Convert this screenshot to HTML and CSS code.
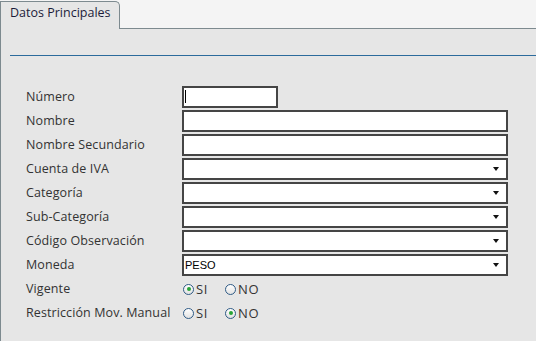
FILE: index.html
```html
<!DOCTYPE html>
<html lang="es">
<head>
    <meta charset="UTF-8">
    <title>Datos Principales</title>
    <link rel="stylesheet" href="styles.css">
</head>
<body>
    <div class="tabs">
        <div class="tab">Datos Principales</div>
        <div class="tab-fill"></div>
    </div>
    <div class="panel">
        <div class="rule"></div>
        <form class="form">
            <label for="numero">Número</label>
            <div class="field small">
                <input type="text" id="numero">
                <span class="caret"></span>
            </div>

            <label for="nombre">Nombre</label>
            <input type="text" id="nombre">

            <label for="nombre2">Nombre Secundario</label>
            <input type="text" id="nombre2">

            <label for="iva">Cuenta de IVA</label>
            <div class="select-wrap"><select id="iva"><option></option></select></div>

            <label for="categoria">Categoría</label>
            <div class="select-wrap"><select id="categoria"><option></option></select></div>

            <label for="subcat">Sub-Categoría</label>
            <div class="select-wrap"><select id="subcat"><option></option></select></div>

            <label for="obs">Código Observación</label>
            <div class="select-wrap"><select id="obs"><option></option></select></div>

            <label for="moneda">Moneda</label>
            <div class="select-wrap"><select id="moneda"><option>PESO</option></select></div>

            <label>Vigente</label>
            <div class="radios">
                <label class="radio"><input type="radio" name="vigente" checked>SI</label>
                <label class="radio"><input type="radio" name="vigente">NO</label>
            </div>

            <label>Restricción Mov. Manual</label>
            <div class="radios">
                <label class="radio"><input type="radio" name="restriccion">SI</label>
                <label class="radio"><input type="radio" name="restriccion" checked>NO</label>
            </div>
        </form>
    </div>
</body>
</html>
```

FILE: styles.css
```css
html, body {
    height: 100%;
}
body {
    margin: 0;
    font-family: "Open Sans", Arial, sans-serif;
    font-size: 12.5px;
    letter-spacing: 0.1px;
    color: #333;
    background-color: #e6e6e6;
    display: flex;
    flex-direction: column;
}
.tabs {
    display: flex;
    align-items: flex-end;
    background-color: #f4f4f4;
    height: 29px;
}
.tab {
    box-sizing: border-box;
    width: 120px;
    height: 28px;
    padding: 2px 0 0 9px;
    background-color: #e6e6e6;
    border: 1px solid #7d8a8f;
    border-bottom: none;
    border-radius: 0 5px 0 0;
    color: #1c1c3a;
    font-size: 12.5px;
    letter-spacing: 0;
}
.tab-fill {
    flex: 1;
    border-bottom: 1px solid #7d8a8f;
}
.panel {
    flex: 1;
    border-left: 1px solid #7d8a8f;
    padding: 26px 0 0 0;
}
.rule {
    margin-left: 9px;
    border-top: 1px solid #2c6b9c;
}
.form {
    display: grid;
    grid-template-columns: 156px 326px;
    grid-auto-rows: 22px;
    row-gap: 2px;
    align-items: center;
    padding: 30px 0 0 25px;
}
.form > label {
    line-height: 22px;
}
input[type="text"], select {
    box-sizing: border-box;
    width: 100%;
    height: 22px;
    margin: 0;
    border: 2px solid #454545;
    border-radius: 0;
    background-color: #fff;
    font-family: "Liberation Sans", Arial, sans-serif;
    font-size: 11px;
    color: #000;
    outline: none;
}
select {
    appearance: none;
    padding: 0 0 0 1px;
}
.field {
    position: relative;
    height: 22px;
}
.small {
    width: 96px;
}
.caret {
    position: absolute;
    left: 3px;
    top: 4px;
    width: 1px;
    height: 13px;
    background-color: #000;
}
.select-wrap {
    position: relative;
    height: 22px;
}
.select-wrap::after {
    content: "";
    position: absolute;
    right: 9px;
    top: 9px;
    border-left: 3px solid transparent;
    border-right: 3px solid transparent;
    border-top: 4px solid #111;
}
.radios {
    display: flex;
    align-items: center;
    gap: 6px;
    padding-left: 1px;
}
.radio {
    display: flex;
    align-items: center;
    gap: 2px;
    min-width: 36px;
    font-size: 13px;
    letter-spacing: 0.6px;
}
.radio input {
    appearance: none;
    width: 11px;
    height: 11px;
    margin: 0;
    border: 1px solid #2f5b86;
    border-radius: 50%;
    background: linear-gradient(#fff, #e2e2e2);
    display: flex;
    align-items: center;
    justify-content: center;
}
.radio input:checked::after {
    content: "";
    width: 4px;
    height: 4px;
    border-radius: 50%;
    background-color: #27a437;
}
```
